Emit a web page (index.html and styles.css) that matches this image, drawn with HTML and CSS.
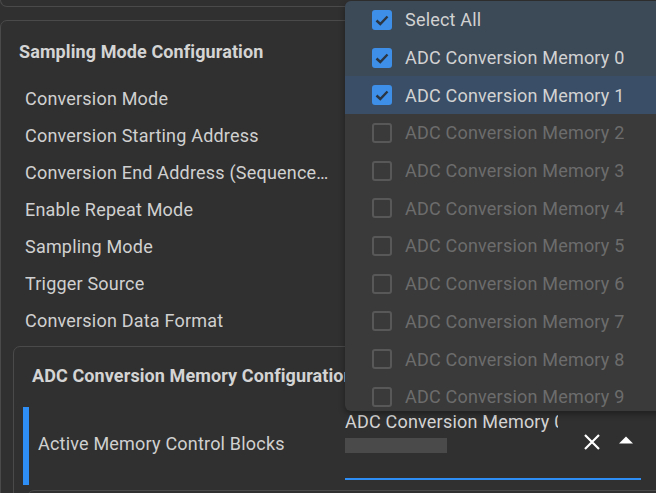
FILE: index.html
```html
<!DOCTYPE html>
<html>
<head>
<meta charset="utf-8">
<link rel="stylesheet" href="styles.css">
</head>
<body>
<div class="page">
  <div class="prev-card"></div>
  <section class="card">
    <h2 class="card-title">Sampling Mode Configuration</h2>
    <ul class="rows">
      <li class="row"><span class="label">Conversion Mode</span></li>
      <li class="row"><span class="label">Conversion Starting Address</span></li>
      <li class="row"><span class="label">Conversion End Address (Sequence Length)</span></li>
      <li class="row"><span class="label">Enable Repeat Mode</span></li>
      <li class="row"><span class="label">Sampling Mode</span></li>
      <li class="row"><span class="label">Trigger Source</span></li>
      <li class="row"><span class="label">Conversion Data Format</span></li>
    </ul>
    <section class="card nested">
      <h3 class="card-title">ADC Conversion Memory Configuration</h3>
      <div class="field">
        <span class="bar"></span>
        <span class="label field-label">Active Memory Control Blocks</span>
        <div class="select">
          <div class="select-value">
            <span class="select-text">ADC Conversion Memory 0, ADC Conversion Memory 1</span>
            <span class="chip"></span>
          </div>
          <span class="clear">
            <svg width="18" height="18" viewBox="0 0 18 18"><path d="M2 2 L16 16 M16 2 L2 16" stroke="#ffffff" stroke-width="2.2" fill="none"/></svg>
          </span>
          <span class="caret">
            <svg width="14" height="8" viewBox="0 0 14 8"><polygon points="0,7.5 7,0.5 14,7.5" fill="#ffffff"/></svg>
          </span>
        </div>
      </div>
      <section class="card sub"></section>
    </section>
  </section>

  <div class="dropdown">
    <ul class="options">
      <li class="option checked"><span class="box"><svg width="20" height="20" viewBox="0 0 20 20"><path d="M4.5 10.5 L8.3 14 L15.5 6.5" stroke="#2b3642" stroke-width="2.4" fill="none"/></svg></span><span class="opt-text">Select All</span></li>
      <li class="option checked"><span class="box"><svg width="20" height="20" viewBox="0 0 20 20"><path d="M4.5 10.5 L8.3 14 L15.5 6.5" stroke="#2b3642" stroke-width="2.4" fill="none"/></svg></span><span class="opt-text">ADC Conversion Memory 0</span></li>
      <li class="option checked active"><span class="box"><svg width="20" height="20" viewBox="0 0 20 20"><path d="M4.5 10.5 L8.3 14 L15.5 6.5" stroke="#2b3642" stroke-width="2.4" fill="none"/></svg></span><span class="opt-text">ADC Conversion Memory 1</span></li>
      <li class="option"><span class="box"></span><span class="opt-text">ADC Conversion Memory 2</span></li>
      <li class="option"><span class="box"></span><span class="opt-text">ADC Conversion Memory 3</span></li>
      <li class="option"><span class="box"></span><span class="opt-text">ADC Conversion Memory 4</span></li>
      <li class="option"><span class="box"></span><span class="opt-text">ADC Conversion Memory 5</span></li>
      <li class="option"><span class="box"></span><span class="opt-text">ADC Conversion Memory 6</span></li>
      <li class="option"><span class="box"></span><span class="opt-text">ADC Conversion Memory 7</span></li>
      <li class="option"><span class="box"></span><span class="opt-text">ADC Conversion Memory 8</span></li>
      <li class="option"><span class="box"></span><span class="opt-text">ADC Conversion Memory 9</span></li>
    </ul>
  </div>
</div>
</body>
</html>
```

FILE: styles.css
```css
* { box-sizing: border-box; }
html, body {
  margin: 0;
  padding: 0;
  background: #303030;
  overflow: hidden;
}
body {
  font-family: Roboto, "Liberation Sans", sans-serif;
  color: #d2d2d2;
  width: 656px;
  height: 493px;
}
.page {
  position: relative;
  width: 656px;
  height: 493px;
  overflow: hidden;
}
.prev-card {
  height: 7px;
  width: 720px;
  border: 1px solid #4a4a4a;
  border-top: none;
  border-radius: 0 0 7px 7px;
}
.card {
  border: 1px solid #4a4a4a;
  border-radius: 7px;
}
.page > .card {
  margin-top: 13px;
  width: 720px;
  padding: 0 0 40px 12px;
}
.card-title {
  margin: 0;
  font-size: 18px;
  font-weight: 700;
  line-height: 20px;
  color: #d4d4d4;
  letter-spacing: 0.1px;
  white-space: nowrap;
}
.page > .card > .card-title {
  padding: 21px 0 0 6px;
}
.rows {
  list-style: none;
  margin: 18px 0 0 12px;
  padding: 0;
}
.row {
  height: 37px;
  display: flex;
  align-items: center;
}
.label {
  font-size: 18px;
  letter-spacing: 0.2px;
  color: #d0d0d0;
  white-space: nowrap;
  overflow: hidden;
  text-overflow: ellipsis;
  max-width: 304px;
}
.nested {
  margin-top: 7px;
  padding: 19px 0 0 0;
}
.nested > .card-title {
  padding-left: 18px;
}
.field {
  margin-top: 21px;
  height: 78px;
  display: flex;
  align-items: stretch;
  padding-left: 9px;
}
.bar {
  width: 6px;
  background: #2e8ef5;
  flex: none;
}
.field-label {
  margin-left: 9px;
  align-self: center;
  margin-bottom: 5px;
  width: 307px;
  max-width: 307px;
}
.select {
  width: 296px;
  height: 73px;
  border-bottom: 2px solid #2e8ef5;
  display: flex;
  align-items: center;
}
.select-value {
  width: 213px;
  align-self: flex-start;
  padding-top: 4px;
  display: flex;
  flex-direction: column;
  gap: 6px;
}
.select-text {
  font-size: 18px;
  letter-spacing: 0.2px;
  line-height: 21px;
  color: #d4d4d4;
  white-space: nowrap;
  overflow: hidden;
}
.chip {
  display: block;
  width: 102px;
  height: 15px;
  background: #4a4a4a;
}
.clear {
  margin-left: 25px;
  display: flex;
  margin-top: -2px;
}
.caret {
  margin-left: 18px;
  display: flex;
  margin-top: -6px;
}
.sub {
  margin: 5px 0 0 13px;
  height: 40px;
}

.dropdown {
  position: absolute;
  left: 345px;
  top: 1px;
  width: 330px;
  height: 410px;
  background: #3a3a3a;
  border-radius: 6px;
  overflow: hidden;
  box-shadow: 0 3px 6px rgba(0,0,0,0.35);
}
.options {
  list-style: none;
  margin: 0;
  padding: 0;
}
.option {
  height: 37.7px;
  display: flex;
  align-items: center;
  padding-left: 27px;
  gap: 13px;
}
.option.checked {
  background: #3c4957;
}
.option.active {
  background: #3a4e67;
}
.box {
  width: 20px;
  height: 20px;
  border: 2px solid #585858;
  border-radius: 3px;
  flex: none;
  display: flex;
}
.option.checked .box {
  border: none;
  background: #3d8fe8;
}
.opt-text {
  font-size: 18px;
  letter-spacing: 0.2px;
  white-space: nowrap;
  color: #6c6c6c;
}
.option.checked .opt-text {
  color: #d2d2d2;
}
```
